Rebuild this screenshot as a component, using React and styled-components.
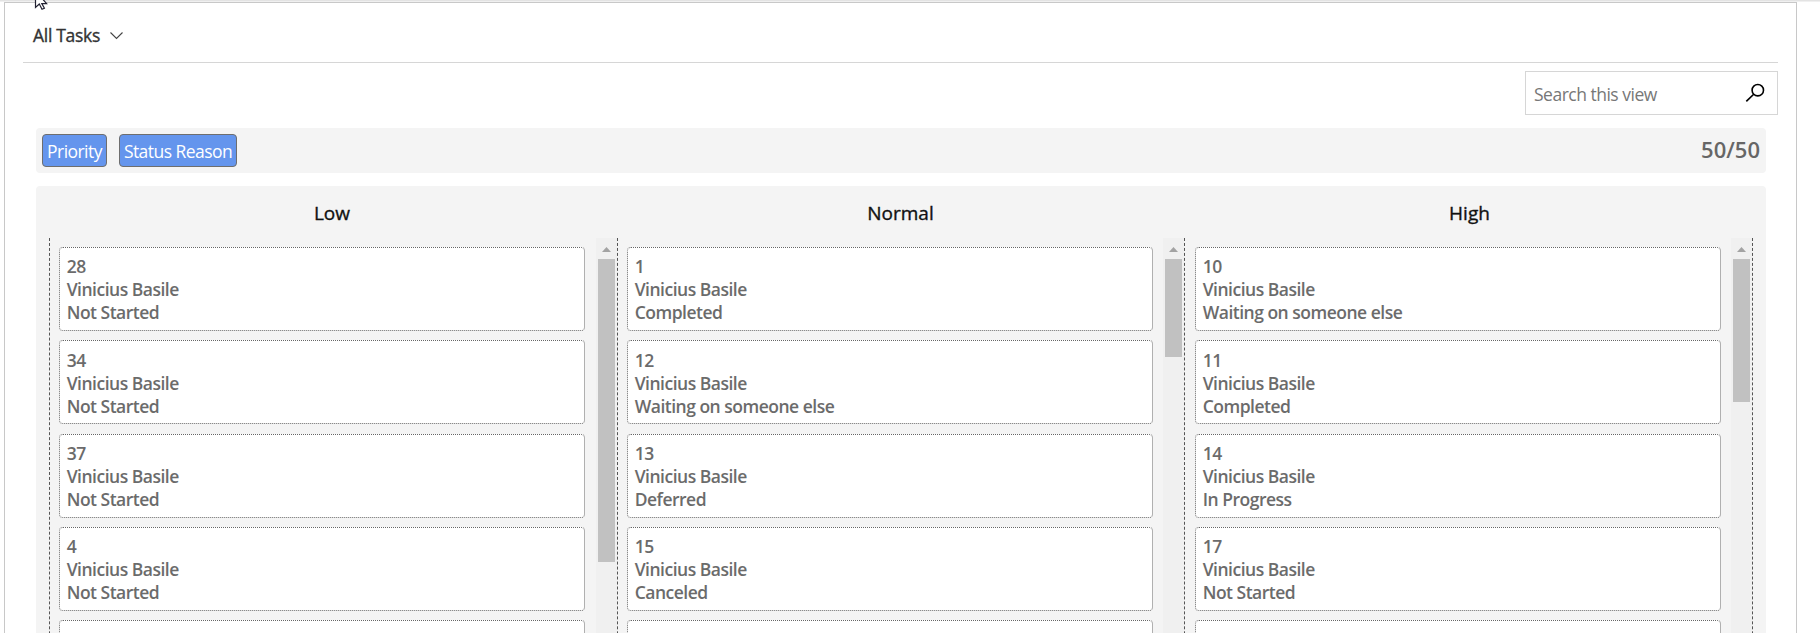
import React from 'react';
import styled, { createGlobalStyle } from 'styled-components';

const Global = createGlobalStyle`
  * { box-sizing: border-box; }
  body { margin: 0; background: #fff; font-family: 'Open Sans', 'Noto Sans', sans-serif; overflow: hidden; }
`;

const Page = styled.div`
  position: relative;
  height: 633px;
  overflow: hidden;
  padding: 2px 23px 0 4px;
  background: linear-gradient(#e3e3e3 0 1px, #f0f0f0 1px 2px, #fff 2px);
`;
const Frame = styled.main`
  height: 650px;
  border: 1px solid #c8c8c8;
  padding: 0 18px;
  background: #fff;
`;
const ViewHeader = styled.header`
  height: 60px;
  border-bottom: 1px solid #d6d6d6;
  display: flex;
  align-items: center;
  gap: 10px;
  padding: 5px 0 0 10px;
`;
const ViewName = styled.span`
  font-size: 17.5px;
  line-height: 24px;
  color: #333;
  -webkit-text-stroke: 0.35px #333;
  white-space: nowrap;
  letter-spacing: -0.3px;
  width: 67px;
`;
const SearchRow = styled.div`
  display: flex;
  justify-content: flex-end;
  padding-top: 8px;
`;
const SearchBox = styled.div`
  width: 253px;
  height: 44px;
  border: 1px solid #d6d6d6;
  display: flex;
  align-items: center;
  justify-content: space-between;
  padding: 0 12px 0 8px;
`;
const Placeholder = styled.span`
  padding-top: 2px;
  font-size: 17.5px;
  color: #777;
  white-space: nowrap;
  letter-spacing: -0.5px;
`;
const FilterBar = styled.div`
  margin: 13px 12px 0 13px;
  height: 45px;
  border-radius: 4px;
  background: #f4f4f4;
  display: flex;
  align-items: center;
  padding: 0 6px;
  gap: 12px;
`;
const Chip = styled.span`
  width: ${p => p.$width}px;
  height: 33px;
  border: 1px solid #6e6e6e;
  border-radius: 4px;
  background: #6495ed;
  color: #fff;
  font-size: 17.5px;
  line-height: 33px;
  text-align: center;
  white-space: nowrap;
  letter-spacing: -0.55px;
`;
const Count = styled.span`
  margin-left: auto;
  padding-bottom: 4px;
  font-size: 22px;
  font-weight: 600;
  color: #666;
`;
const Board = styled.section`
  margin: 13px 12px 0 13px;
  height: 460px;
  border-radius: 4px;
  background: #f4f4f4;
  padding: 0 13px;
  display: grid;
  grid-template-columns: 568px 567px 569px;
`;
const Column = styled.div`
  display: flex;
  flex-direction: column;
`;
const Title = styled.h2`
  margin: 0;
  height: 52px;
  padding: 1px ${p => (p.$first ? 2 : 0)}px 0 ${p => (p.$last ? 2 : 0)}px;
  font-size: 19px;
  font-weight: 400;
  line-height: 52px;
  text-align: center;
  color: #111;
  -webkit-text-stroke: 0.35px #111;
`;
const Lane = styled.div`
  flex: 1;
  display: flex;
  justify-content: space-between;
  border-left: 1px dashed #555;
  border-right: ${p => (p.$last ? '1px dashed #555' : '0')};
  padding-left: ${p => (p.$last ? 10 : 9)}px;
`;
const Cards = styled.div`
  width: 526px;
  padding-top: 8.8px;
  display: flex;
  flex-direction: column;
  gap: 9.4px;
`;
const Card = styled.article`
  height: 84px;
  flex: none;
  border: 1px dotted #666;
  border-right: 1px solid #b0b0b0;
  border-radius: 4px;
  background: #fff;
  padding: 7.5px 6.7px;
  font-size: 17.5px;
  font-weight: 600;
  line-height: 23px;
  letter-spacing: -0.5px;
  color: #6b6b6b;
`;
const Line = styled.div`
  white-space: nowrap;
`;
const Track = styled.div`
  width: 21px;
  background: #f0f0f0;
  padding: 9px 2px 0;
  display: flex;
  flex-direction: column;
  align-items: flex-start;
`;
const Arrow = styled.svg`
  display: block;
  margin: 0 0 7px 4px;
`;
const Thumb = styled.div`
  width: 17px;
  height: ${p => p.$height}px;
  background: #c1c1c1;
`;
const Cursor = styled.svg`
  position: absolute;
  left: 34px;
  top: -10px;
`;

const OWNER = 'Vinicius Basile';
const columns = [
  { title: 'Low', thumb: 303, cards: [['28', 'Not Started'], ['34', 'Not Started'], ['37', 'Not Started'], ['4', 'Not Started'], null] },
  { title: 'Normal', thumb: 98, cards: [['1', 'Completed'], ['12', 'Waiting on someone else'], ['13', 'Deferred'], ['15', 'Canceled'], null] },
  { title: 'High', thumb: 143, cards: [['10', 'Waiting on someone else'], ['11', 'Completed'], ['14', 'In Progress'], ['17', 'Not Started'], null] },
];

export default function App() {
  return (
    <Page>
      <Global />
      <Frame>
        <ViewHeader>
          <ViewName>All Tasks</ViewName>
          <svg width="13" height="10" viewBox="0 0 13 10" fill="none" stroke="#444" strokeWidth="1.1"><path d="M.5 2.5 6.5 8.5 12.5 2.5" /></svg>
        </ViewHeader>
        <SearchRow>
          <SearchBox>
            <Placeholder>Search this view</Placeholder>
            <svg width="20" height="20" viewBox="0 0 20 20" fill="none" stroke="#000" strokeWidth="1.6"><circle cx="12.8" cy="7.2" r="5.7" /><path d="M8.7 11.2 1.3 18.4" /></svg>
          </SearchBox>
        </SearchRow>
        <FilterBar>
          <Chip $width={65}>Priority</Chip>
          <Chip $width={118}>Status Reason</Chip>
          <Count>50/50</Count>
        </FilterBar>
        <Board>
          {columns.map((c, i) => (
            <Column key={c.title}>
              <Title $first={i === 0} $last={i === 2}>{c.title}</Title>
              <Lane $last={i === 2}>
                <Cards>
                  {c.cards.map((k, j) => (
                    <Card key={j}>{k && <><Line>{k[0]}</Line><Line>{OWNER}</Line><Line>{k[1]}</Line></>}</Card>
                  ))}
                </Cards>
                <Track>
                  <Arrow width="9" height="5" viewBox="0 0 9 5"><path d="M0 5 4.5 0 9 5Z" fill="#a3a3a3" /></Arrow>
                  <Thumb $height={c.thumb} />
                </Track>
              </Lane>
            </Column>
          ))}
        </Board>
      </Frame>
      <Cursor width="16" height="22" viewBox="0 0 16 22"><path d="M1.5 1V17.5L5.3 14 8 19.3 10.4 18.2 7.8 13.6H12.6Z" fill="#fff" stroke="#223" strokeWidth="1.2" /></Cursor>
    </Page>
  );
}
